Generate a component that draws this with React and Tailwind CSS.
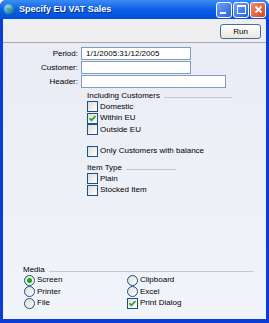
import React from "react";

const font = { fontFamily: '"Liberation Sans", Arial, sans-serif' };

function Check({ checked }) {
  return (
    <div className="w-[11px] h-[11px] border border-[#1C5180] bg-gradient-to-br from-[#DCDCD7] to-white flex items-center justify-center shrink-0">
      {checked && (
        <svg width="9" height="9" viewBox="0 0 9 9">
          <path d="M1.5 4.2 L3.5 6.3 L7.5 2" stroke="#21A121" strokeWidth="1.6" fill="none" />
        </svg>
      )}
    </div>
  );
}

function Radio({ checked }) {
  return (
    <div className="w-[11px] h-[11px] rounded-full border border-[#1C5180] bg-gradient-to-br from-[#DCDCD7] to-white flex items-center justify-center shrink-0">
      {checked && <div className="w-[5px] h-[5px] rounded-full bg-[#21A121]" />}
    </div>
  );
}

function CheckRow({ label, checked }) {
  return (
    <div className="h-[11.5px] flex items-center gap-[1px]">
      <Check checked={checked} />
      <span className="text-[8px] leading-none text-black ml-[1px]">{label}</span>
    </div>
  );
}

function RadioRow({ label, checked }) {
  return (
    <div className="h-[11.5px] flex items-center gap-[1px]">
      <Radio checked={checked} />
      <span className="text-[8px] leading-none text-black ml-[1px]">{label}</span>
    </div>
  );
}

function SectionHead({ label, width }) {
  return (
    <div className="h-[10px] flex items-center" style={{ width }}>
      <span className="text-[8px] leading-none text-black whitespace-nowrap">{label}</span>
      <div className="flex-1 ml-[4px] mt-[3px] h-[1px] bg-[#C5C8D2]" />
    </div>
  );
}

function Field({ label, value, w }) {
  return (
    <div className="h-[13px] flex items-center">
      <div className="w-[78px] pr-[3px] text-right text-[8px] leading-none text-black">{label}</div>
      <div className={`${w} h-[13px] border border-[#7F9DB9] bg-white flex items-center pl-[4px] text-[8px] leading-none text-black`}>
        {value}
      </div>
    </div>
  );
}

export default function App() {
  return (
    <div className="w-[269px] h-[323px] bg-[#0A3DD8] rounded-t-[6px] flex flex-col overflow-hidden" style={font}>
      {/* Title bar */}
      <div className="h-[19px] shrink-0 flex items-center px-[3px] bg-gradient-to-b from-[#3C8CF5] via-[#0A5FE6] to-[#0250D8]">
        <svg width="13" height="13" viewBox="0 0 13 13" className="shrink-0">
          <defs>
            <radialGradient id="g" cx="0.35" cy="0.35" r="0.7">
              <stop offset="0" stopColor="#C8F0FF" />
              <stop offset="0.5" stopColor="#3AA0D8" />
              <stop offset="1" stopColor="#0A4A9A" />
            </radialGradient>
          </defs>
          <circle cx="6.5" cy="6.5" r="6" fill="url(#g)" />
          <path d="M3 5 Q5 3 7 5 T10 6 Q9 9 6 9 Q4 8 3 5Z" fill="#2E8A5C" opacity="0.6" />
        </svg>
        <span className="ml-[3px] text-white font-bold text-[9px] leading-none whitespace-nowrap" style={{ textShadow: "1px 1px 0 #0A2A8A" }}>
          Specify EU VAT Sales
        </span>
        <div className="ml-auto flex gap-[1px] items-center">
          <div className="w-[16px] h-[16px] rounded-[3px] border border-white bg-gradient-to-br from-[#6FA0FF] to-[#2A5FE0] flex items-end justify-start pl-[3px] pb-[3px]">
            <div className="w-[6px] h-[2px] bg-white" />
          </div>
          <div className="w-[16px] h-[16px] rounded-[3px] border border-white bg-gradient-to-br from-[#6FA0FF] to-[#2A5FE0] flex items-center justify-center">
            <div className="w-[9px] h-[9px] border border-white border-t-2" />
          </div>
          <div className="w-[16px] h-[16px] rounded-[3px] border border-white bg-gradient-to-br from-[#F08A6A] to-[#D8401A] flex items-center justify-center">
            <svg width="9" height="9" viewBox="0 0 9 9">
              <path d="M1.5 1.5 L7.5 7.5 M7.5 1.5 L1.5 7.5" stroke="white" strokeWidth="1.8" />
            </svg>
          </div>
        </div>
      </div>

      <div className="flex-1 mx-[3px] mb-[4px] flex flex-col bg-[#ECEEF4]">
        {/* Toolbar */}
        <div className="h-[24px] shrink-0 bg-[#EEEEF0] border-b border-[#A8A8B0] flex items-start justify-end pt-[5px] pr-[5px]">
          <div className="w-[41px] h-[15px] rounded-[3px] border border-[#4A6A92] bg-gradient-to-b from-white to-[#E6E6E0] flex items-center justify-center text-[8px] leading-none text-black">
            Run
          </div>
        </div>

        {/* Body */}
        <div className="flex-1 flex flex-col bg-gradient-to-b from-[#E9ECF4] to-[#F1F4FA] pt-[4px]">
          <div className="flex flex-col gap-[1px]">
            <Field label="Period:" value="1/1/2005:31/12/2005" w="w-[110px]" />
            <Field label="Customer:" value="" w="w-[110px]" />
            <Field label="Header:" value="" w="w-[145px]" />
          </div>

          <div className="pl-[84px] mt-[3px] flex flex-col">
            <SectionHead label="Including Customers" width="145px" />
            <CheckRow label="Domestic" />
            <CheckRow label="Within EU" checked />
            <CheckRow label="Outside EU" />
            <div className="mt-[10px]">
              <CheckRow label="Only Customers with balance" />
            </div>
            <div className="mt-[6px]">
              <SectionHead label="Item Type" width="89px" />
            </div>
            <CheckRow label="Plain" />
            <CheckRow label="Stocked Item" />
          </div>

          <div className="mt-auto pl-[20px] pb-[10px] flex flex-col">
            <SectionHead label="Media" width="230px" />
            <div className="flex">
              <div className="w-[104px] flex flex-col pl-[1px]">
                <RadioRow label="Screen" checked />
                <RadioRow label="Printer" />
                <RadioRow label="File" />
              </div>
              <div className="flex flex-col">
                <RadioRow label="Clipboard" />
                <RadioRow label="Excel" />
                <CheckRow label="Print Dialog" checked />
              </div>
            </div>
          </div>
        </div>
      </div>
    </div>
  );
}
